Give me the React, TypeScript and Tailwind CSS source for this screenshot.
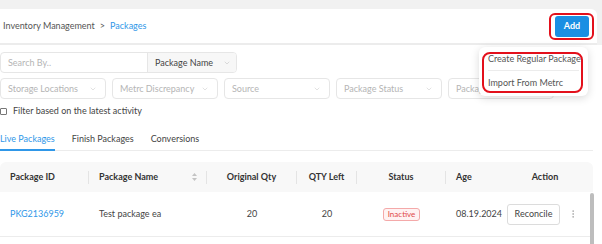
import { ChevronDown, EllipsisVertical } from "lucide-react";

const filters = ["Storage Locations", "Metrc Discrepancy", "Source", "Package Status", "Package Type"];

function SortIcon() {
  return (
    <svg width="5" height="8" viewBox="0 0 5 8" className="fill-[#c4c4c4]">
      <path d="M2.5 0L5 3H0z" />
      <path d="M2.5 8L0 5h5z" />
    </svg>
  );
}

function Sep() {
  return <span className="ml-auto h-[13px] w-px bg-[#e4e4e4]" />;
}

export default function App() {
  return (
    <div className="relative h-[244px] w-[602px] overflow-hidden bg-white font-['Lato',sans-serif] text-[9px] text-[#4a4a4a]">
      {/* top header */}
      <div className="bg-[#f1f1f1] pt-[9px]">
        <div className="mr-[5px] flex h-[36px] items-center justify-between rounded-tr-md border-b-2 border-[#ececec] bg-white pl-[3px] pr-[8px]">
          <div className="flex items-center gap-[5px] text-[#555]">
            <span>Inventory Management</span>
            <span>&gt;</span>
            <span className="text-[#2f97e8]">Packages</span>
          </div>
          <button className="h-[21px] w-[34px] rounded-[3px] bg-[#1a8fe3] text-[9px] font-bold text-white">Add</button>
        </div>
      </div>

      <div className="pt-[7px]">
        {/* search */}
        <div className="flex h-[21px] w-[237px] overflow-hidden rounded-[4px] border border-[#e6e6e6]">
          <div className="flex w-[147px] items-center border-r border-[#e6e6e6] pl-[7px] text-[#b5b5b5]">Search By..</div>
          <div className="flex flex-1 items-center justify-between bg-[#f7f7f7] pl-[7px] pr-[5px] text-[#444]">
            <span>Package Name</span>
            <ChevronDown size={8} strokeWidth={1.5} className="text-[#bbb]" />
          </div>
        </div>

        {/* filters */}
        <div className="mt-[5px] flex gap-[6px]">
          {filters.map((f) => (
            <div key={f} className="flex h-[21px] w-[106px] shrink-0 items-center justify-between rounded-[4px] border border-[#e6e6e6] pl-[7px] pr-[8px] text-[#b5b5b5]">
              <span className="whitespace-nowrap">{f}</span>
              <ChevronDown size={8} strokeWidth={1.5} className="text-[#c4c4c4]" />
            </div>
          ))}
        </div>

        {/* checkbox */}
        <label className="mt-[7px] flex h-[10px] items-center gap-[6px] text-[#444]">
          <span className="h-[7px] w-[7px] rounded-[1px] border border-[#777]" />
          <span>Filter based on the latest activity</span>
        </label>

        {/* tabs */}
        <div className="mt-[17px] flex w-[593px] gap-[17px] border-b border-[#ececec]">
          <div className="-mb-px border-b-2 border-[#2f97e8] pb-[4px] leading-[12px] text-[#2f97e8]">Live Packages</div>
          <div className="-mb-px pb-[4px] leading-[12px] text-[#444]">Finish Packages</div>
          <div className="-mb-px pb-[4px] leading-[12px] text-[#444]">Conversions</div>
        </div>

        {/* table */}
        <div className="relative mt-[11px] w-[593px]">
          <div className="grid h-[30px] grid-cols-[89px_118px_90px_60px_89px_51px_96px] items-center rounded-t-md bg-[#f8f8f8] font-bold text-[#333]">
            <div className="flex items-center pl-[10px]"><span>Package ID</span><Sep /></div>
            <div className="flex items-center pl-[10px]">
              <span>Package Name</span>
              <span className="ml-auto mr-[9px]"><SortIcon /></span>
              <span className="h-[13px] w-px bg-[#e4e4e4]" />
            </div>
            <div className="flex items-center"><span className="flex-1 text-center">Original Qty</span><span className="h-[13px] w-px bg-[#e4e4e4]" /></div>
            <div className="flex items-center"><span className="flex-1 text-center">QTY Left</span><span className="h-[13px] w-px bg-[#e4e4e4]" /></div>
            <div className="flex items-center"><span className="flex-1 text-center">Status</span><span className="h-[13px] w-px bg-[#e4e4e4]" /></div>
            <div className="pl-[10px]">Age</div>
            <div className="text-center">Action</div>
          </div>
          <div className="grid h-[45px] grid-cols-[89px_118px_90px_60px_89px_51px_96px] items-center border-b border-[#ececec] text-[#444]">
            <div className="pl-[10px] text-[#2f97e8]">PKG2136959</div>
            <div className="pl-[10px]">Test package ea</div>
            <div className="text-center">20</div>
            <div className="text-center">20</div>
            <div className="flex justify-center">
              <span className="rounded-[3px] border border-[#f4a9a9] bg-[#fff2f2] px-[4px] text-[8px] leading-[11px] text-[#e04a4a]">Inactive</span>
            </div>
            <div className="whitespace-nowrap pl-[10px]">08.19.2024</div>
            <div className="flex items-center pl-[10px]">
              <button className="h-[21px] w-[53px] rounded-[3px] border border-[#dcdcdc] bg-white text-[9px] text-[#444]">Reconcile</button>
              <EllipsisVertical size={10} strokeWidth={1.5} className="ml-[8px] text-[#999]" />
            </div>
          </div>
          <div className="absolute left-[590px] top-[31px] h-[60px] w-[4px] rounded-full bg-[#bdbdbd]" />
        </div>
      </div>

      {/* dropdown menu */}
      <div className="absolute left-[479px] top-[47px] flex h-[49px] w-[109px] flex-col rounded-md bg-white px-[9px] text-[#555] shadow-[0_2px_8px_rgba(0,0,0,0.15)]">
        <div className="flex h-[24px] items-center whitespace-nowrap border-b border-[#ececec]">Create Regular Package</div>
        <div className="flex h-[24px] items-center whitespace-nowrap">Import From Metrc</div>
      </div>

      {/* annotation outlines */}
      <div className="absolute left-[549px] top-[13px] h-[27px] w-[45px] rounded-[6px] border-2 border-[#e3101b]" />
      <div className="absolute left-[482px] top-[52px] h-[41px] w-[101px] rounded-[8px] border-2 border-[#e3101b]" />
    </div>
  );
}
